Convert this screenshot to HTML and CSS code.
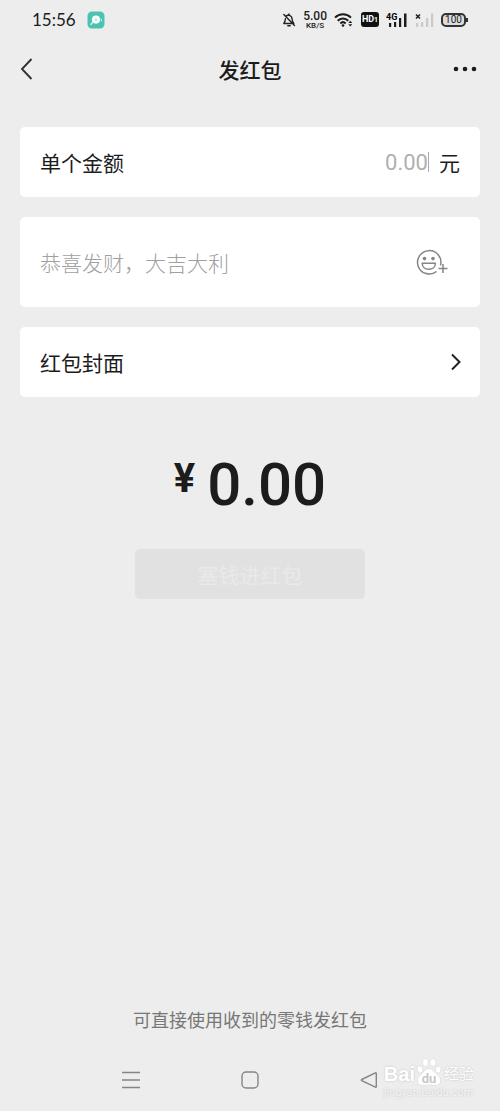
FILE: index.html
```html
<!DOCTYPE html>
<html lang="zh-CN">
<head>
    <meta charset="UTF-8">
    <meta name="viewport" content="width=device-width, initial-scale=1.0">
    <title>发红包</title>
    <link rel="stylesheet" href="styles.css">
</head>
<body>
    <div class="status-bar">
        <span class="clock">15:56</span>
        <svg class="app-icon" width="18" height="18" viewBox="0 0 18 18">
            <rect x="0.5" y="0.5" width="17" height="17" rx="4.5" fill="#4bc3b0"/>
            <path d="M3.500 13.800l3-3" stroke="#d8f5f0" stroke-width="1.400" fill="none"/>
            <circle cx="9" cy="8.600" r="4.100" fill="#f2fffc"/>
            <circle cx="9" cy="8.800" r="1" fill="#8fdcd0"/>
            <path d="M14.200 7.500q.7 1.500 0 3" stroke="#c9eee8" fill="none"/>
        </svg>

        <div class="status-right">
            <svg class="bell" width="14" height="16" viewBox="0 0 14 16" fill="none" stroke="#222" stroke-width="1.400" stroke-linejoin="round" stroke-linecap="round">
                <path d="M4 4.300C5 2.700 9.500 2.700 10 6.500c.2 2.500.6 3.600 1.800 5H1.800C3.200 9.800 3.300 8.500 3.400 6.800M7 2v1M5.800 13.700h2.400M1.800 2.500l10.700 11"/>
            </svg>
            <div class="speed">
                <span class="speed-value">5.00</span>
                <span class="speed-unit">KB/S</span>
            </div>
            <svg class="wifi" width="20" height="16" viewBox="0 0 20 16" fill="none" stroke="#1c1c1c" stroke-width="2">
                <path d="M1 5.600C5.500 1 12.500 1 17 5.600M3.700 8.700c3-3.100 7.600-3.100 10.600 0M6.300 11.400c1.600-1.500 3.800-1.500 5.400 0"/>
                <circle cx="9" cy="13.500" r="1.300" fill="#1c1c1c" stroke="none"/>
                <path d="M14.300 10.900l2-2.200 2 2.200zM14.300 12.300l2 2.200 2-2.200z" fill="#1c1c1c" stroke="none"/>
            </svg>
            <span class="hd">HD<small>1</small></span>
            <svg class="signal" width="22" height="16" viewBox="0 0 22 16">
                <text class="net-type" x="0" y="8">4G</text>
                <path d="M3 11h2.200v4H3zM8 10h2.200v5H8zM13 6h2.200v9H13zM18 1.500h2.500V15H18z" fill="#1c1c1c"/>
            </svg>
            <svg class="signal-off" width="19" height="16" viewBox="0 0 19 16">
                <path d="M1 2.500l4 4M5 2.500l-4 4" stroke="#1c1c1c" stroke-width="1.500"/>
                <path d="M1 11h2.200v4H1zM6 10h2.200v5H6zM11 6h2.200v9H11zM16 1.500h2.200V15H16z" fill="#c9c9c9"/>
            </svg>
            <span class="battery">100</span>
        </div>
    </div>

    <header class="header">
        <button class="icon-btn" type="button" aria-label="返回">
            <svg width="14" height="24" viewBox="0 0 14 24" fill="none" stroke="#333" stroke-width="1.900">
                <path d="M11.500 2L2 12l9.500 10"/>
            </svg>
        </button>
        <h1>发红包</h1>
        <button class="icon-btn more" type="button" aria-label="更多">
            <svg width="24" height="24" viewBox="0 0 24 24" fill="#1c1c1c">
                <circle cx="3" cy="12" r="2.300"/>
                <circle cx="12" cy="12" r="2.300"/>
                <circle cx="21" cy="12" r="2.300"/>
            </svg>
        </button>
    </header>

    <main>
        <form class="packet-form">
            <div class="card">
                <label for="amount">单个金额</label>
                <input type="text" id="amount" class="amount-input" placeholder="0.00" inputmode="decimal">
                <span class="caret"></span>
                <span class="unit">元</span>
            </div>

            <div class="card card-wish">
                <input type="text" id="wish" class="wish-input" placeholder="恭喜发财，大吉大利" aria-label="祝福语">
                <button class="icon-btn" type="button" aria-label="添加表情">
                    <svg width="32" height="28" viewBox="0 0 32 28" fill="none" stroke="#858585" stroke-width="1.500">
                        <path d="M24.500 17.500A11.700 11.700 0 1 0 20.500 23.500"/>
                        <path d="M6.200 15.200h13.200c0 3.700-2.800 6-6.600 6s-6.600-2.300-6.600-6z" stroke-linejoin="round"/>
                        <circle cx="8.500" cy="10.600" r="1.800" fill="#858585" stroke="none"/>
                        <circle cx="17" cy="10.600" r="1.800" fill="#858585" stroke="none"/>
                        <path d="M22.500 20.500h9M27 16v9"/>
                    </svg>
                </button>
            </div>

            <a class="card card-link" href="#cover">
                <span>红包封面</span>
                <svg class="arrow" width="12" height="18" viewBox="0 0 12 18" fill="none" stroke="#222" stroke-width="2">
                    <path d="M2 1.500L9.500 9 2 16.500"/>
                </svg>
            </a>

            <div class="total">
                <span class="currency">¥</span>
                <span class="total-value">0.00</span>
            </div>

            <button class="submit-btn" type="submit" disabled>塞钱进红包</button>
        </form>
    </main>

    <p class="tip">可直接使用收到的零钱发红包</p>

    <nav class="nav-bar">
        <button class="icon-btn" type="button" aria-label="最近任务">
            <svg width="20" height="20" viewBox="0 0 20 20" fill="none" stroke="#858585" stroke-width="1.500">
                <path d="M1 2.500h18M1 10h18M1 17.500h18"/>
            </svg>
        </button>
        <button class="icon-btn" type="button" aria-label="主屏幕">
            <svg width="20" height="20" viewBox="0 0 20 20" fill="none" stroke="#858585" stroke-width="1.400">
                <rect x="2" y="2" width="16" height="16" rx="4"/>
            </svg>
        </button>
        <button class="icon-btn" type="button" aria-label="返回上一页">
            <svg width="20" height="20" viewBox="0 0 20 20" fill="none" stroke="#858585" stroke-width="1.400" stroke-linejoin="round">
                <path d="M17.300 3.300v13.400q0 .8-.9.400L2.700 10.600q-.8-.6 0-1.100l13.700-6.600q.9-.4.900.400z"/>
            </svg>
        </button>
    </nav>

    <div class="watermark">
        <div class="watermark-logo">
            <span class="brand">Bai</span>
            <svg width="26" height="30" viewBox="0 0 26 30" fill="#fff" stroke="#d6d6d6" stroke-width="0.600">
                <ellipse cx="4" cy="12.500" rx="2.900" ry="3.700" transform="rotate(-15 4 12.500)"/>
                <ellipse cx="9.500" cy="5.500" rx="3" ry="4"/>
                <ellipse cx="17" cy="5.500" rx="3" ry="4"/>
                <ellipse cx="22.300" cy="12.500" rx="2.900" ry="3.700" transform="rotate(15 22.300 12.500)"/>
                <path d="M13 11.500C9.500 11.500 8 15 5 17.500c-2.500 2-4 4-3.500 7C2.100 28 5 28.500 8.500 28.200c3-.3 6-.3 9 0 3.500.3 6.400-.2 7-3.700.5-3-1-5-3.500-7-3-2.500-4.500-6-8-6z"/>
                <text class="paw-text" x="13" y="26" text-anchor="middle">du</text>
            </svg>
            <span class="brand-cn">经验</span>
        </div>
        <div class="watermark-url">jingyan.baidu.com</div>
    </div>
</body>
</html>
```

FILE: styles.css
```css
* {
    box-sizing: border-box;
}
body {
    margin: 0;
    min-height: 100vh;
    display: flex;
    flex-direction: column;
    position: relative;
    background-color: #ededed;
    color: #1c1c1c;
    font-family: Roboto, "Noto Sans CJK SC", sans-serif;
    font-size: 21px;
}
svg {
    display: block;
}
.icon-btn {
    padding: 0;
    border: none;
    background: none;
    cursor: pointer;
}

/* status bar */
.status-bar {
    display: flex;
    align-items: center;
    height: 39px;
    padding: 0 34px 0 32px;
}
.clock {
    font-family: Lato, sans-serif;
    font-size: 17px;
}
.app-icon {
    margin-left: 11px;
}
.status-right {
    display: flex;
    align-items: center;
    gap: 7px;
    margin-left: auto;
}
.speed {
    display: flex;
    flex-direction: column;
    align-items: center;
    font-weight: 500;
}
.speed-value {
    font-size: 12px;
    line-height: 12px;
}
.speed-unit {
    font-size: 8px;
    line-height: 8px;
}
.hd {
    width: 18px;
    border-radius: 3px;
    background-color: #111;
    color: #fff;
    font-size: 9px;
    font-weight: 700;
    line-height: 14px;
    text-align: center;
}
.hd small {
    font-size: 7px;
}
.net-type {
    font-size: 9px;
    font-weight: 700;
}
.battery {
    position: relative;
    width: 25px;
    border: 2px solid #333;
    border-radius: 5px;
    background-color: #dcdcdc;
    font-size: 10px;
    line-height: 10px;
    text-align: center;
}
.battery::after {
    content: "";
    position: absolute;
    top: 3px;
    right: -4px;
    width: 2px;
    height: 4px;
    background-color: #333;
}

/* title bar */
.header {
    display: grid;
    grid-template-columns: 1fr auto 1fr;
    align-items: center;
    height: 60px;
    padding: 0 20px;
}
.header h1 {
    margin: 0;
    font-size: 21px;
    font-weight: 500;
}
.header .icon-btn {
    justify-self: start;
}
.header .more {
    justify-self: end;
    padding-right: 3px;
}

/* form */
.packet-form {
    display: flex;
    flex-direction: column;
    gap: 20px;
    padding: 28px 20px 0;
}
.card {
    display: flex;
    align-items: center;
    min-height: 70px;
    padding: 0 20px;
    border-radius: 5px;
    background-color: #fff;
    color: #1c1c1c;
    text-decoration: none;
}
.card-wish {
    min-height: 90px;
    padding-right: 32px;
}
.card-link {
    padding-right: 18px;
}
.card input {
    flex: 1;
    min-width: 0;
    padding: 0;
    border: none;
    outline: none;
    background: none;
    font-family: inherit;
}
.card input::placeholder {
    color: #b0b0b0;
}
.amount-input {
    font-size: 22px;
    text-align: right;
}
.card .wish-input {
    padding-top: 3px;
    font-size: 21px;
    font-weight: 300;
}
.card .wish-input::placeholder {
    color: #a0a0a0;
}
.caret {
    width: 1px;
    height: 20px;
    background-color: #aaa;
}
.unit {
    margin-left: 10px;
}
.arrow {
    margin-left: auto;
}

.total {
    display: flex;
    align-items: flex-start;
    justify-content: center;
    gap: 12px;
    margin-top: 36px;
    font-weight: 500;
}
.currency {
    font-size: 40px;
    font-weight: 700;
    line-height: 52px;
}
.total-value {
    font-size: 60px;
    line-height: 64px;
}
.submit-btn {
    align-self: center;
    width: 230px;
    height: 50px;
    margin-top: 12px;
    border: none;
    border-radius: 5px;
    background-color: #e1e1e1;
    color: #e9e9e9;
    font-family: inherit;
    font-size: 21px;
}

/* bottom */
.tip {
    margin: auto 0 0;
    color: #777;
    font-size: 18px;
    line-height: 26px;
    text-align: center;
}
.nav-bar {
    display: flex;
    align-items: center;
    justify-content: space-between;
    height: 62px;
    margin-top: 15px;
    padding: 0 121px;
}

.watermark {
    position: absolute;
    right: 26px;
    bottom: 12px;
    color: #fff;
    text-shadow: 0 0 2px #bbb;
}
.watermark-logo {
    display: flex;
    align-items: flex-end;
    gap: 1px;
}
.brand {
    font-family: "Liberation Sans", sans-serif;
    font-size: 20px;
    font-weight: 700;
    line-height: 26px;
}
.paw-text {
    fill: #c8c8c8;
    stroke: none;
    font-size: 13px;
    font-weight: 700;
    text-shadow: none;
}
.brand-cn {
    margin-left: 1px;
    font-size: 15px;
    line-height: 26px;
}
.watermark-url {
    color: #f5f5f5;
    font-size: 11px;
    line-height: 12px;
}
```
